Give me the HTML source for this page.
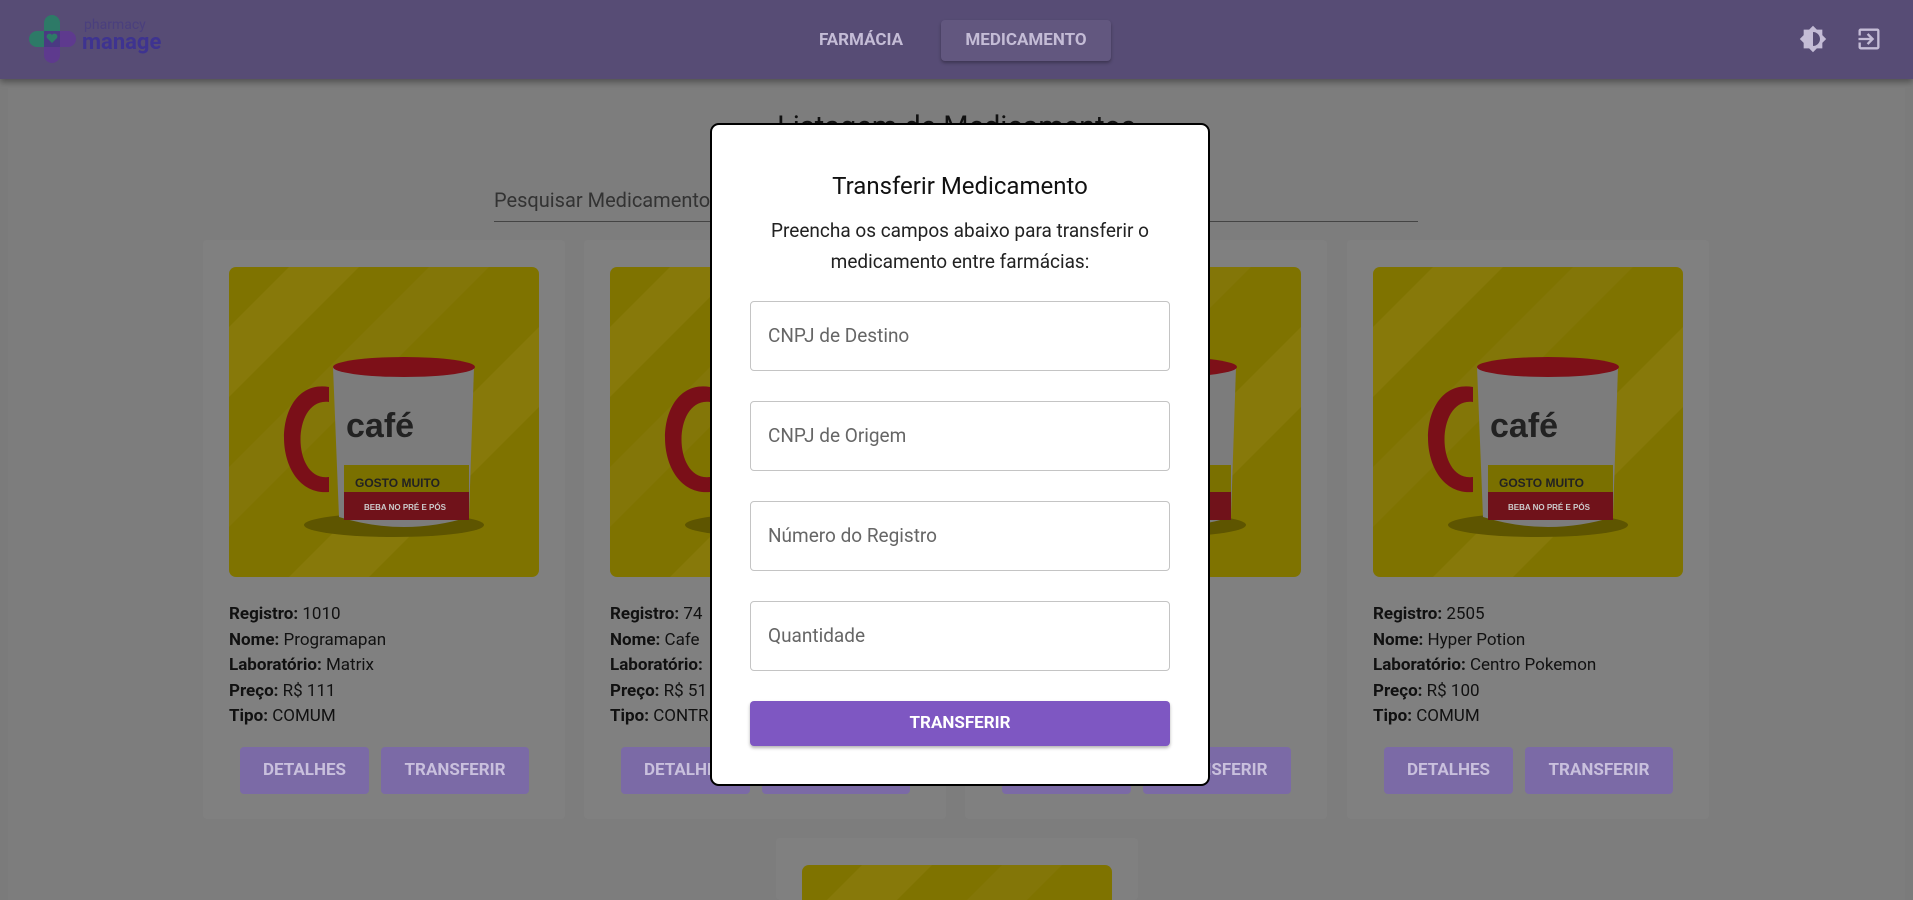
<!DOCTYPE html>
<html style="width:1913px;height:900px;overflow:hidden"><head><meta charset="utf-8"><style>
*{box-sizing:border-box;margin:0;padding:0}
body{width:1913px;height:900px;overflow:hidden;background:#7b7b7b;font-family:"Roboto","Liberation Sans",sans-serif;position:relative}
.hdr{position:absolute;left:0;top:0;width:1913px;height:79px;background:#574c75;box-shadow:0 3px 6px rgba(0,0,0,.35)}
.nav{position:absolute;top:20px;height:41px;line-height:41px;color:#c4bcd6;font-weight:bold;font-size:17px;text-align:center;border-radius:4px}
.card{position:absolute;width:362px;height:579px;background:#808080;border-radius:4px}
.img{position:absolute;left:26px;top:27px;width:310px;height:310px;border-radius:7px;overflow:hidden}
.info{position:absolute;left:26px;top:362px;font-size:17px;line-height:25.5px;color:#111}
.btn{position:absolute;top:507px;height:47px;line-height:47px;background:#7b6aa6;color:#c9c0dd;font-weight:bold;font-size:17px;text-align:center;border-radius:4px}
.modal{position:absolute;left:710px;top:123px;width:500px;height:663px;background:#fff;border:2px solid #000;border-radius:9px;box-shadow:0 0 0 1px #fff inset}
.inp{position:absolute;left:38px;width:420px;height:70px;border:1px solid #c4c4c4;border-radius:4px;font-size:19px;color:#666;padding-left:17px;line-height:68px}
</style></head><body>
<div style="position:absolute;left:8px;top:88px;width:1897px;height:812px;background:#7d7d7d"></div>
<div class="hdr">
 <svg style="position:absolute;left:28px;top:14px" width="50" height="50" viewBox="0 0 50 50">
  <rect x="16" y="1" width="16" height="26" rx="8" fill="#2d7a67"/>
  <rect x="1" y="17" width="26" height="16" rx="8" fill="#2d7a67"/>
  <rect x="16" y="17" width="16" height="32" rx="8" fill="#5e3a8e"/>
  <rect x="16" y="17" width="32" height="16" rx="8" fill="#5e3a8e"/>
  <rect x="16" y="17" width="16" height="16" fill="#4a3a82"/>
  <path d="M24 29l-5-5a2.5 2.5 0 0 1 5-3a2.5 2.5 0 0 1 5 3z" fill="#2d7a67"/>
 </svg>
 <div style="position:absolute;left:84px;top:17px;font-size:14px;color:#4a3f7e">pharmacy</div>
 <div style="position:absolute;left:82px;top:30px;font-size:22px;font-weight:bold;color:#3e3390">manage</div>
 <div class="nav" style="left:800px;width:122px">FARMÁCIA</div>
 <div class="nav" style="left:941px;width:170px;background:#62577f;box-shadow:0 2px 3px rgba(0,0,0,.3)">MEDICAMENTO</div>
 <svg style="position:absolute;left:1799px;top:25px" width="28" height="28" viewBox="0 0 24 24"><path fill="#c4bcd6" d="M20 8.69V4h-4.69L12 .69 8.69 4H4v4.69L.69 12 4 15.31V20h4.69L12 23.31 15.31 20H20v-4.69L23.31 12 20 8.69zM12 18V6c3.31 0 6 2.690 6 6s-2.69 6-6 6z"/></svg>
 <svg style="position:absolute;left:1855px;top:25px" width="28" height="28" viewBox="0 0 24 24"><path fill="#c4bcd6" d="M10.09 15.59L11.5 17l5-5-5-5-1.41 1.41L12.67 11H3v2h9.67l-2.58 2.59zM19 3H5c-1.11 0-2 .9-2 2v4h2V5h14v14H5v-4H3v4c0 1.1.89 2 2 2h14c1.1 0 2-.9 2-2V5c0-1.1-.9-2-2-2z"/></svg>
</div>
<div style="position:absolute;left:0;width:1913px;top:110px;text-align:center;font-size:29px;color:#111">Listagem de Medicamentos</div>
<div style="position:absolute;left:494px;top:188px;font-size:20px;color:#333">Pesquisar Medicamento</div>
<div style="position:absolute;left:494px;top:221px;width:924px;height:1px;background:#444"></div>

<svg width="0" height="0" style="position:absolute"><defs>
<g id="mug">
 <rect width="310" height="310" fill="#7f7300"/>
 <polygon points="0,60 60,0 130,0 0,130" fill="#87790a"/>
 <polygon points="60,310 310,60 310,140 140,310" fill="#87790a"/>
 <polygon points="200,0 260,0 0,260 0,200" fill="#837608"/>
 <ellipse cx="165" cy="258" rx="90" ry="12" fill="#5e5500"/>
 <path d="M100 120 C40 110 40 230 100 225 L100 210 C62 215 62 130 100 135z" fill="#7a0f18"/>
 <path d="M104 100 L245 100 L240 250 Q175 270 110 250z" fill="#7c7c7c"/>
 <ellipse cx="175" cy="100" rx="71" ry="10" fill="#7d1018"/>
 <text x="117" y="170" font-family="Liberation Sans" font-weight="bold" font-size="34" fill="#222">café</text>
 <rect x="115" y="198" width="125" height="27" fill="#7a7000"/>
 <rect x="115" y="225" width="125" height="28" fill="#70121a"/>
 <text x="126" y="220" font-family="Liberation Sans" font-weight="bold" font-size="12" fill="#222">GOSTO MUITO</text>
 <text x="135" y="243" font-family="Liberation Sans" font-weight="bold" font-size="8" fill="#ccc">BEBA NO PRÉ E PÓS</text>
</g></defs></svg>

<div class="card" style="left:203px;top:240px"><svg class="img" viewBox="0 0 310 310"><use href="#mug"/></svg>
 <div class="info"><b>Registro:</b> 1010<br><b>Nome:</b> Programapan<br><b>Laboratório:</b> Matrix<br><b>Preço:</b> R$ 111<br><b>Tipo:</b> COMUM</div>
 <div class="btn" style="left:37px;width:129px">DETALHES</div><div class="btn" style="left:178px;width:148px">TRANSFERIR</div></div>
<div class="card" style="left:584px;top:240px"><svg class="img" viewBox="0 0 310 310"><use href="#mug"/></svg>
 <div class="info"><b>Registro:</b> 74<br><b>Nome:</b> Cafe<br><b>Laboratório:</b><br><b>Preço:</b> R$ 51<br><b>Tipo:</b> CONTR</div>
 <div class="btn" style="left:37px;width:129px">DETALHES</div><div class="btn" style="left:178px;width:148px">TRANSFERIR</div></div>
<div class="card" style="left:965px;top:240px"><svg class="img" viewBox="0 0 310 310"><use href="#mug"/></svg>
 <div class="info"><br><br>on<br><br></div>
 <div class="btn" style="left:37px;width:129px">DETALHES</div><div class="btn" style="left:178px;width:148px">TRANSFERIR</div></div>
<div class="card" style="left:1347px;top:240px"><svg class="img" viewBox="0 0 310 310"><use href="#mug"/></svg>
 <div class="info"><b>Registro:</b> 2505<br><b>Nome:</b> Hyper Potion<br><b>Laboratório:</b> Centro Pokemon<br><b>Preço:</b> R$ 100<br><b>Tipo:</b> COMUM</div>
 <div class="btn" style="left:37px;width:129px">DETALHES</div><div class="btn" style="left:178px;width:148px">TRANSFERIR</div></div>
<div class="card" style="left:776px;top:838px;height:62px;overflow:hidden"><svg class="img" viewBox="0 0 310 310"><use href="#mug"/></svg></div>

<div class="modal">
 <div style="position:absolute;top:47px;width:100%;text-align:center;font-size:24px;color:#111">Transferir Medicamento</div>
 <div style="position:absolute;top:90px;width:100%;text-align:center;font-size:19px;line-height:31px;color:#222">Preencha os campos abaixo para transferir o<br>medicamento entre farmácias:</div>
 <div class="inp" style="top:176px">CNPJ de Destino</div>
 <div class="inp" style="top:276px">CNPJ de Origem</div>
 <div class="inp" style="top:376px">Número do Registro</div>
 <div class="inp" style="top:476px">Quantidade</div>
 <div style="position:absolute;left:38px;top:576px;width:420px;height:45px;line-height:45px;background:#7e57c2;color:#fff;font-weight:bold;font-size:17px;text-align:center;border-radius:4px;box-shadow:0 2px 3px rgba(0,0,0,.3)">TRANSFERIR</div>
</div>
</body></html>
